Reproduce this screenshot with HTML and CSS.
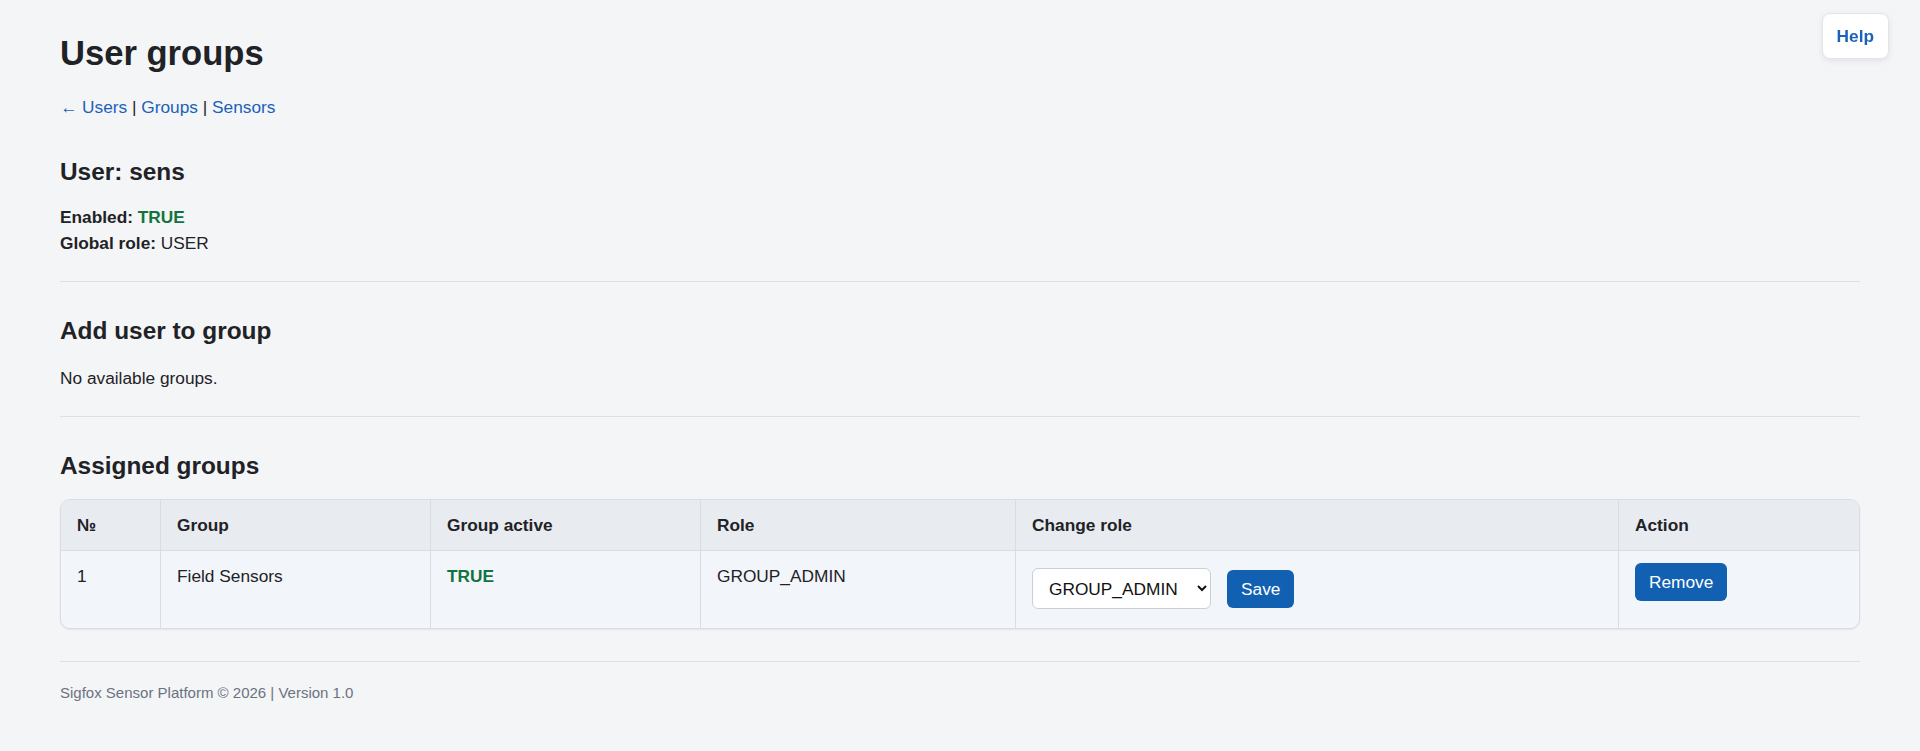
FILE: index.html
```html
<!DOCTYPE html>
<html lang="en">
<head>
<meta charset="utf-8">
<title>User groups</title>
<link rel="stylesheet" href="styles.css">
</head>
<body>
<a class="help-btn" href="#">Help</a>
<main class="page">
  <h1 class="title">User groups</h1>
  <p class="crumbs"><a href="#">← Users</a> | <a href="#">Groups</a> | <a href="#">Sensors</a></p>

  <section class="section section-user">
    <h2 class="section-title first">User: sens</h2>
    <div class="info-line"><strong>Enabled:</strong> <span class="ok">TRUE</span></div>
    <div class="info-line"><strong>Global role:</strong> USER</div>
  </section>

  <hr class="divider">

  <section class="section">
    <h2 class="section-title add">Add user to group</h2>
    <p class="plain">No available groups.</p>
  </section>

  <hr class="divider">

  <section class="section">
    <h2 class="section-title assigned">Assigned groups</h2>
    <div class="table-wrap">
      <table class="grid">
        <colgroup>
          <col class="c-num">
          <col class="c-group">
          <col class="c-active">
          <col class="c-role">
          <col class="c-change">
          <col class="c-action">
        </colgroup>
        <thead>
          <tr>
            <th>№</th>
            <th>Group</th>
            <th>Group active</th>
            <th>Role</th>
            <th>Change role</th>
            <th>Action</th>
          </tr>
        </thead>
        <tbody>
          <tr>
            <td>1</td>
            <td>Field Sensors</td>
            <td><span class="ok">TRUE</span></td>
            <td>GROUP_ADMIN</td>
            <td>
              <form class="role-form">
                <select class="role-select">
                  <option selected>GROUP_ADMIN</option>
                  <option>USER</option>
                </select>
                <button type="button" class="btn">Save</button>
              </form>
            </td>
            <td>
              <form class="action-form">
                <button type="button" class="btn">Remove</button>
              </form>
            </td>
          </tr>
        </tbody>
      </table>
    </div>
  </section>

  <footer class="footer">Sigfox Sensor Platform © 2026 | Version 1.0</footer>
</main>
</body>
</html>
```

FILE: styles.css
```css
* { box-sizing: border-box; }

html, body {
  margin: 0;
  padding: 0;
  background: #f4f5f7;
}

body {
  font-family: "Liberation Sans", Arial, sans-serif;
  font-size: 17.3px;
  line-height: 26px;
  color: #1f2226;
}

.page {
  padding: 0 60px;
}

a {
  color: #1b62b8;
  text-decoration: none;
}

.title {
  font-size: 34.6px;
  line-height: 41.5px;
  font-weight: 700;
  margin: 33px 0 19px;
}

.crumbs {
  margin: 0;
  height: 26px;
  color: #1f2226;
}

.section-title {
  font-size: 24.4px;
  line-height: 29.3px;
  font-weight: 700;
  margin: 0;
}

.section-title.first { margin: 37px 0 18px; }
.section-title.add { margin: 34px 0 20px; }
.section-title.assigned { margin: 34px 0 19px; }

.info-line strong { font-weight: 700; }

.ok {
  color: #13733f;
  font-weight: 700;
}

.plain { margin: 0; }

.divider {
  border: 0;
  border-top: 1px solid #dcdfe6;
  margin: 25px 0 0;
  height: 0;
}

.table-wrap {
  border: 1px solid #d8dce3;
  border-radius: 10px;
  overflow: hidden;
  background: #f2f5fa;
  box-shadow: 0 1px 2px rgba(0, 0, 0, 0.07);
}

.grid {
  width: 100%;
  table-layout: fixed;
  border-collapse: separate;
  border-spacing: 0;
}

.c-num { width: 100px; }
.c-group { width: 270px; }
.c-active { width: 270px; }
.c-role { width: 315px; }
.c-change { width: 603px; }

.grid th,
.grid td {
  text-align: left;
  padding: 12px 16px;
  border-right: 1px solid #d8dce3;
}

.grid th:last-child,
.grid td:last-child { border-right: 0; }

.grid th {
  background: #e8ecf0;
  font-weight: 700;
  vertical-align: middle;
  border-bottom: 1px solid #d8dce3;
}

.grid td {
  vertical-align: top;
  background: #f2f5fa;
  padding-bottom: 14px;
}

.role-form {
  display: flex;
  align-items: center;
  gap: 16px;
  margin: 0;
}

.action-form { margin: 0; }

.role-select {
  width: 179px;
  height: 41px;
  margin: 5px 0;
  padding: 0 8px 0 12px;
  font-family: "Liberation Sans", Arial, sans-serif;
  font-size: 17.3px;
  color: #111;
  background: #fff;
  border: 1px solid #c9ced8;
  border-radius: 6px;
}

.btn {
  display: inline-block;
  font-family: "Liberation Sans", Arial, sans-serif;
  font-size: 17.3px;
  line-height: 20px;
  padding: 9px 14px;
  border: 0;
  border-radius: 6px;
  background: #1160b2;
  color: #fff;
  cursor: pointer;
}

.footer {
  margin-top: 32px;
  border-top: 1px solid #dcdfe6;
  padding-top: 20px;
  font-size: 15px;
  line-height: 22.5px;
  color: #6b7280;
}

.help-btn {
  position: fixed;
  top: 13px;
  right: 31px;
  display: block;
  padding: 12px 14px;
  line-height: 20px;
  font-weight: 700;
  color: #1b62b8;
  background: #fff;
  border: 1px solid #e1e4ea;
  border-radius: 8px;
  box-shadow: 0 2px 6px rgba(0, 0, 0, 0.08);
}
```
